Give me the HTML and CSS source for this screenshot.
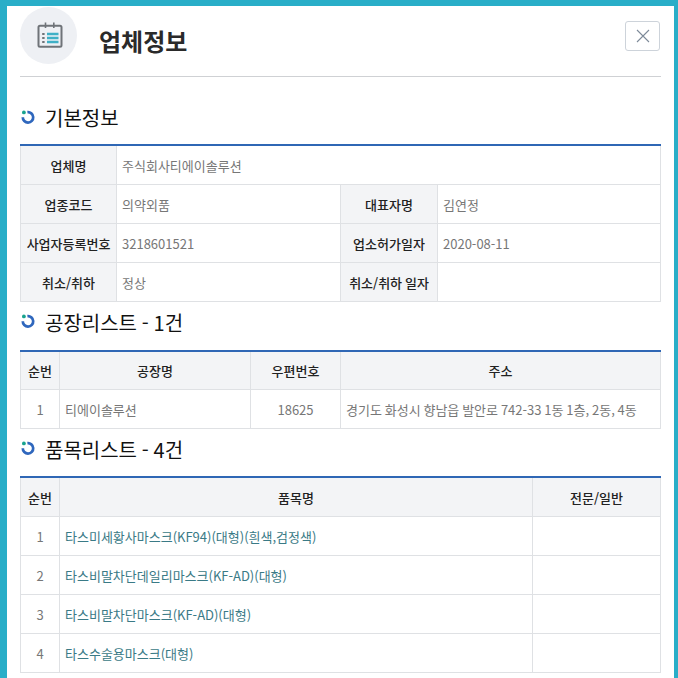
FILE: index.html
```html
<!DOCTYPE html>
<html lang="ko">
<head>
<meta charset="utf-8">
<title>업체정보</title>
<link rel="stylesheet" href="styles.css">
</head>
<body>
<div class="modal">
  <header class="head">
    <span class="head-icon">
      <svg class="cal" width="26" height="26" viewBox="0 0 26 26" fill="none">
        <rect x="1.5" y="3.8" width="23" height="21" rx="1.5" stroke="#6f7378" stroke-width="2"/>
        <path d="M8.5 0.5v5.6M16.8 0.5v5.6" stroke="#6f7378" stroke-width="1.6"/>
        <path d="M5.2 12h2.4M5.2 16h2.4M5.2 20h2.4" stroke="#6f7378" stroke-width="1.8"/>
        <path d="M10 12h11.5M10 16h11.5M10 20h11.5" stroke="#3fb0c6" stroke-width="2.4"/>
      </svg>
    </span>
    <h1 class="head-title">업체정보</h1>
    <button class="close" type="button" aria-label="닫기">
      <svg width="14" height="14" viewBox="0 0 14 14" fill="none"><path d="M1 1l12 12M13 1L1 13" stroke="#7d8a99" stroke-width="1.1"/></svg>
    </button>
  </header>

  <h2 class="sec sec-first"><svg class="dot" width="14" height="14" viewBox="0 0 14 14" fill="none"><path d="M6.4 2.2A5.2 5.2 0 1 1 1.8 7.2" stroke="#2f67bd" stroke-width="2.7"/><circle cx="2.9" cy="2.4" r="1.9" fill="#19a38e"/></svg>기본정보</h2>
  <table class="tbl t1">
    <colgroup><col class="c96"><col class="c224"><col class="c97"><col></colgroup>
    <tr class="r39"><th>업체명</th><td colspan="3">주식회사티에이솔루션</td></tr>
    <tr><th>업종코드</th><td>의약외품</td><th>대표자명</th><td>김연정</td></tr>
    <tr><th>사업자등록번호</th><td>3218601521</td><th>업소허가일자</th><td>2020-08-11</td></tr>
    <tr><th>취소/취하</th><td>정상</td><th>취소/취하 일자</th><td></td></tr>
  </table>

  <h2 class="sec sec-mid"><svg class="dot" width="14" height="14" viewBox="0 0 14 14" fill="none"><path d="M6.4 2.2A5.2 5.2 0 1 1 1.8 7.2" stroke="#2f67bd" stroke-width="2.7"/><circle cx="2.9" cy="2.4" r="1.9" fill="#19a38e"/></svg>공장리스트 - 1건</h2>
  <table class="tbl t2">
    <colgroup><col class="c39"><col class="c191"><col class="c90"><col></colgroup>
    <tr><th>순번</th><th>공장명</th><th>우편번호</th><th>주소</th></tr>
    <tr><td class="ctr">1</td><td>티에이솔루션</td><td class="ctr">18625</td><td>경기도 화성시 향남읍 발안로 742-33 1동 1층, 2동, 4동</td></tr>
  </table>

  <h2 class="sec"><svg class="dot" width="14" height="14" viewBox="0 0 14 14" fill="none"><path d="M6.4 2.2A5.2 5.2 0 1 1 1.8 7.2" stroke="#2f67bd" stroke-width="2.7"/><circle cx="2.9" cy="2.4" r="1.9" fill="#19a38e"/></svg>품목리스트 - 4건</h2>
  <table class="tbl t3">
    <colgroup><col class="c39"><col class="c473"><col></colgroup>
    <tr><th>순번</th><th>품목명</th><th>전문/일반</th></tr>
    <tr><td class="ctr">1</td><td><a class="lnk">타스미세황사마스크(KF94)(대형)(흰색,검정색)</a></td><td></td></tr>
    <tr><td class="ctr">2</td><td><a class="lnk">타스비말차단데일리마스크(KF-AD)(대형)</a></td><td></td></tr>
    <tr><td class="ctr">3</td><td><a class="lnk">타스비말차단마스크(KF-AD)(대형)</a></td><td></td></tr>
    <tr><td class="ctr">4</td><td><a class="lnk">타스수술용마스크(대형)</a></td><td></td></tr>
  </table>
</div>
</body>
</html>
```
FILE: styles.css
```css
* { box-sizing: border-box; }
html, body { margin: 0; padding: 0; height: 678px; overflow: hidden; background: #fff; }
body { font-family: "Noto Sans CJK KR", "Noto Sans", sans-serif; color: #222; word-spacing: -0.05em; }
.modal {
  height: 678px;
  overflow: hidden;
  border-style: solid;
  border-color: #29aec8;
  border-width: 6px 4px 0 7px;
  padding: 0 13px;
  background: #fff;
}
.head {
  display: flex;
  align-items: center;
  height: 71px;
  border-bottom: 1px solid #cfd1d4;
}
.head-icon {
  width: 57px;
  height: 57px;
  margin-top: -12px;
  border-radius: 50%;
  background: #eef0f4;
  display: flex;
  align-items: center;
  justify-content: center;
  flex: none;
}
.cal { margin-left: 2px; }
.head-title {
  margin: -1px 0 0 22px;
  font-size: 24px;
  font-weight: 700;
  color: #2a2a2a;
  line-height: 34px;
  flex: 1;
}
.close {
  width: 35px;
  height: 30px;
  margin: -11px 1px 0 0;
  padding: 0;
  border: 1px solid #cdd3da;
  border-radius: 3px;
  background: #fff;
  display: flex;
  align-items: center;
  justify-content: center;
}
.sec {
  display: flex;
  align-items: center;
  margin: 0;
  height: 47px;
  padding-bottom: 6px;
  font-size: 20px;
  font-weight: 400;
  color: #111;
  line-height: 28px;
}
.sec-mid { height: 48px; }
.sec-first { height: 67px; padding: 15px 0 0; }
.dot { flex: none; margin: -3px 10px 0 1px; }
.tbl {
  width: 641px;
  border-collapse: collapse;
  table-layout: fixed;
  border-top: 2px solid #2f67b5;
  font-size: 13px;
}
.tbl th, .tbl td {
  height: 39px;
  padding: 2px 5px 0;
  border: 1px solid #dfe1e4;
  line-height: 18px;
  white-space: nowrap;
  overflow: hidden;
}
.tbl tr:first-child th, .tbl tr:first-child td { border-top: 0; }
.tbl th { background: #f3f4f6; font-weight: 500; color: #222; text-align: center; padding: 2px 2px 0; }
.tbl td { color: #777; background: #fff; }
.tbl td.ctr { text-align: center; }
.lnk { color: #3a7a86; }
.c96 { width: 96px; }
.c224 { width: 224px; }
.c97 { width: 97px; }
.c39 { width: 39px; }
.c191 { width: 191px; }
.c90 { width: 90px; }
.c473 { width: 473px; }
```
